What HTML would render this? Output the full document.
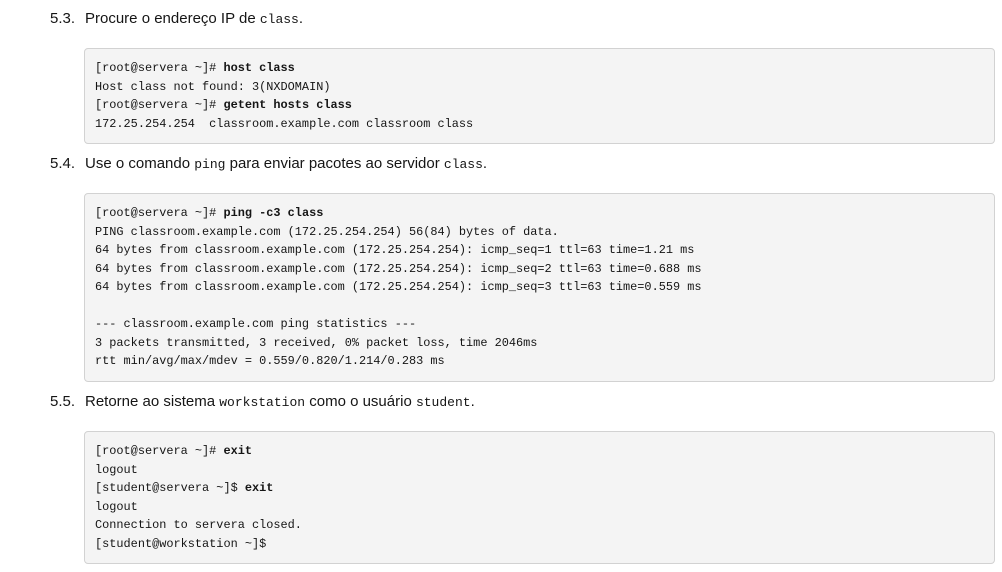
<!DOCTYPE html>
<html><head><meta charset="utf-8"><style>
body{margin:0;background:#fff;width:1002px;height:572px;overflow:hidden;font-family:"Liberation Sans",sans-serif;color:#151515}
.h{position:absolute;left:50px;font-size:15px;white-space:nowrap}
.h .n{display:inline-block;width:35px}
.h code{font-family:"Liberation Mono",monospace;font-size:13px}
pre{position:absolute;left:84px;width:889px;margin:0;background:#f4f4f4;border:1px solid #d2d2d2;border-radius:4px;padding:10px 10px;font-family:"Liberation Mono",monospace;font-size:11.9px;line-height:18.5px;color:#151515}
b{font-weight:bold}
</style></head><body>
<div class="h" style="top:10px"><span class="n">5.3.</span>Procure o endereço IP de <code>class</code>.</div>
<pre style="top:48px">[root@servera ~]# <b>host class</b>
Host class not found: 3(NXDOMAIN)
[root@servera ~]# <b>getent hosts class</b>
172.25.254.254  classroom.example.com classroom class</pre>
<div class="h" style="top:155px"><span class="n">5.4.</span>Use o comando <code>ping</code> para enviar pacotes ao servidor <code>class</code>.</div>
<pre style="top:193px">[root@servera ~]# <b>ping -c3 class</b>
PING classroom.example.com (172.25.254.254) 56(84) bytes of data.
64 bytes from classroom.example.com (172.25.254.254): icmp_seq=1 ttl=63 time=1.21 ms
64 bytes from classroom.example.com (172.25.254.254): icmp_seq=2 ttl=63 time=0.688 ms
64 bytes from classroom.example.com (172.25.254.254): icmp_seq=3 ttl=63 time=0.559 ms

--- classroom.example.com ping statistics ---
3 packets transmitted, 3 received, 0% packet loss, time 2046ms
rtt min/avg/max/mdev = 0.559/0.820/1.214/0.283 ms</pre>
<div class="h" style="top:393px"><span class="n">5.5.</span>Retorne ao sistema <code>workstation</code> como o usuário <code>student</code>.</div>
<pre style="top:431px">[root@servera ~]# <b>exit</b>
logout
[student@servera ~]$ <b>exit</b>
logout
Connection to servera closed.
[student@workstation ~]$</pre>
</body></html>
